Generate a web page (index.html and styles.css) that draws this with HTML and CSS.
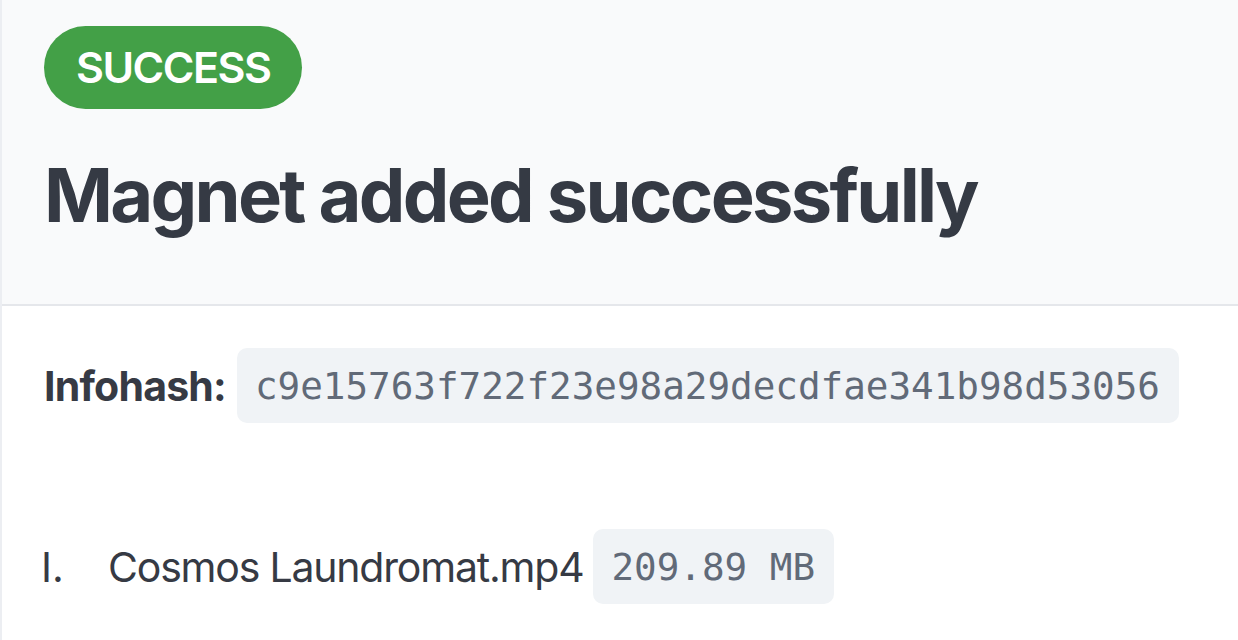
FILE: index.html
```html
<!DOCTYPE html>
<html lang="en">
<head>
<meta charset="utf-8">
<title>Magnet added successfully</title>
<link rel="stylesheet" href="styles.css">
</head>
<body>
<div class="card">
  <header class="card-head">
    <span class="badge">SUCCESS</span>
    <h1 class="title">Magnet added successfully</h1>
  </header>
  <section class="card-body">
    <div class="hash-row">
      <strong class="label">Infohash:</strong>
      <code class="code">c9e15763f722f23e98a29decdfae341b98d53056</code>
    </div>
    <ol class="files">
      <li class="file"><span class="marker">I.</span><span class="name">Cosmos Laundromat.mp4</span> <code class="code">209.89 MB</code></li>
    </ol>
  </section>
</div>
</body>
</html>
```

FILE: styles.css
```css
html, body {
  margin: 0;
  padding: 0;
  background: #ffffff;
}

body {
  font-family: Inter, "Noto Sans", "Liberation Sans", sans-serif;
  color: #363a44;
  overflow: hidden;
}

.card {
  border-left: 2px solid #eceef2;
  min-height: 640px;
}

.card-head {
  background: #f9fafb;
  border-bottom: 2px solid #e5e7eb;
  padding: 26px 0 64px 42px;
}

.badge {
  display: inline-block;
  background: #43a047;
  color: #ffffff;
  font-size: 43px;
  font-weight: 600;
  line-height: 51px;
  letter-spacing: -1.5px;
  padding: 16px 32px;
  border-radius: 42px;
}

.title {
  margin: 41px 0 0 0;
  font-size: 74px;
  line-height: 90px;
  font-weight: 700;
  color: #353a44;
  letter-spacing: -2.7px;
}

.card-body {
  padding: 42px 0 0 42px;
}

.hash-row {
  display: flex;
  align-items: center;
  gap: 11px;
}

.label {
  font-size: 41px;
  font-weight: 700;
  line-height: 50px;
  letter-spacing: -0.8px;
}

.code {
  display: inline-block;
  background: #f0f3f6;
  color: #616a78;
  font-family: "DejaVu Sans Mono", "Liberation Mono", monospace;
  font-size: 37.6px;
  line-height: 43px;
  letter-spacing: 0;
  padding: 17px 19px 15px 18px;
  border-radius: 10px;
}

.files {
  list-style: none;
  margin: 106px 0 0 0;
  padding: 0;
}

.file {
  display: flex;
  align-items: center;
  font-size: 41px;
  line-height: 50px;
}

.marker {
  width: 64px;
  flex: none;
  margin-left: -3px;
  padding-right: 3px;
}

.name {
  margin-right: 10px;
  letter-spacing: -1.2px;
}
```
